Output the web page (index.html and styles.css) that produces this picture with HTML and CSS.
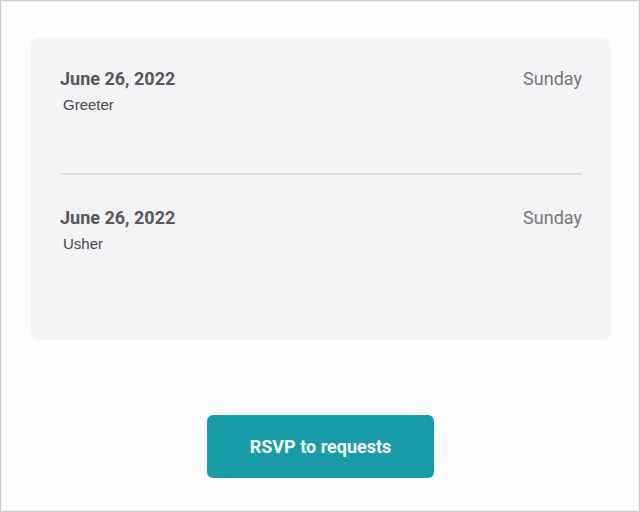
FILE: index.html
```html
<!DOCTYPE html>
<html>
<head>
<meta charset="utf-8">
<link rel="stylesheet" href="styles.css">
</head>
<body>
<div class="frame">
  <section class="card">
    <div class="entry">
      <div class="entry-head">
        <span class="date">June 26, 2022</span>
        <span class="day">Sunday</span>
      </div>
      <div class="role">Greeter</div>
    </div>
    <div class="entry">
      <div class="entry-head">
        <span class="date">June 26, 2022</span>
        <span class="day">Sunday</span>
      </div>
      <div class="role">Usher</div>
    </div>
  </section>
  <div class="actions">
    <button class="rsvp">RSVP to requests</button>
  </div>
</div>
</body>
</html>
```
FILE: styles.css
```css
html, body {
  margin: 0;
  padding: 0;
  background: #fdfdfe;
}
.frame {
  box-sizing: border-box;
  width: 640px;
  height: 512px;
  border: 1px solid #c9c9c9;
  padding: 37px 29px 0 30px;
  font-family: Roboto, "Liberation Sans", sans-serif;
}
.card {
  background: #f4f3f6;
  border-radius: 7px;
  padding: 29px 28px 28px 29px;
}
.entry {
  padding-bottom: 58px;
}
.entry + .entry {
  border-top: 2px solid #dfdee2;
  padding-top: 31px;
}
.entry-head {
  display: flex;
  justify-content: space-between;
  align-items: baseline;
  line-height: 24px;
}
.date {
  font-size: 18px;
  font-weight: 700;
  color: #58575b;
}
.day {
  font-size: 18px;
  color: #78777b;
}
.role {
  font-family: "Liberation Sans", Arial, sans-serif;
  font-size: 15px;
  line-height: 20px;
  color: #48474b;
  margin-top: 4px;
  padding-left: 3px;
}
.actions {
  display: flex;
  justify-content: center;
  padding-top: 75px;
}
.rsvp {
  width: 227px;
  height: 63px;
  border: none;
  border-radius: 6px;
  background: #189ca8;
  color: #f4fbfc;
  font-family: Roboto, sans-serif;
  font-size: 18px;
  font-weight: 700;
  padding: 0;
}
```
